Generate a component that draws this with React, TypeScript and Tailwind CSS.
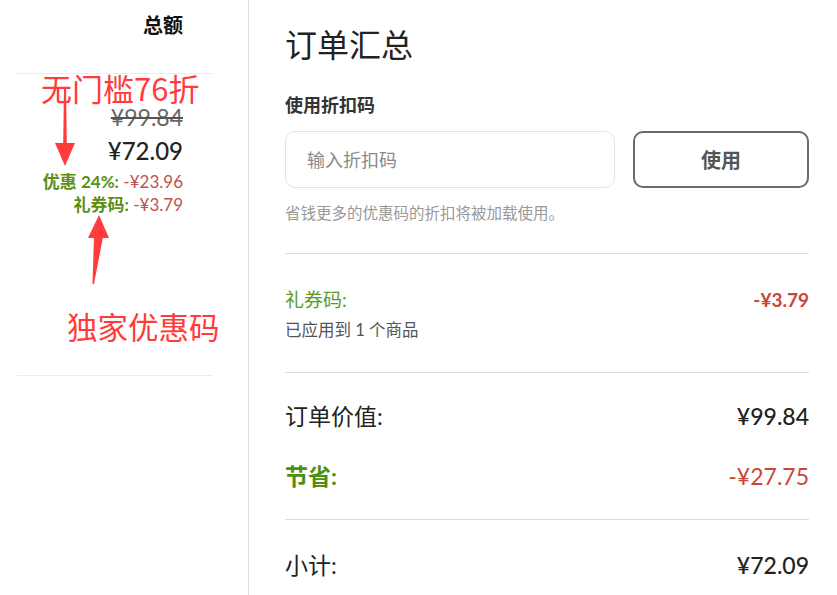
import React from 'react';

const font = { fontFamily: "Lato, 'Noto Sans CJK SC', sans-serif" };

const ArrowDown: React.FC = () => (
  <svg className="absolute left-[50px] top-[86px]" width="30" height="84" viewBox="0 0 30 84">
    <polygon points="14,2 16,2 16.8,58 14,58 13.2,58" fill="#ff3b3b" />
    <polygon points="5,57 25,57 15,80" fill="#ff3b3b" />
  </svg>
);

const ArrowUp: React.FC = () => (
  <svg className="absolute left-[80px] top-[210px]" width="36" height="80" viewBox="0 0 36 80">
    <polygon points="19,5 29,28 8,28" fill="#ff3b3b" />
    <polygon points="14,27 23,27 14,74 12.5,74" fill="#ff3b3b" />
  </svg>
);

const Divider: React.FC<{ className?: string }> = ({ className = '' }) => (
  <div className={`h-px bg-[#dcdcdc] ${className}`} />
);

export default function App() {
  return (
    <div className="w-[837px] h-[595px] bg-white flex overflow-hidden" style={font}>
      {/* Left: totals column */}
      <div className="relative w-[249px] h-full border-r border-[#dedede] pl-[17px] pr-[36px] shrink-0">
        <div className="pt-[12px] h-[38px] leading-[26px] text-[20px] font-bold text-[#111] text-right pr-[29px]">
          总额
        </div>
        <div className="mt-[35px] h-px bg-[#ececec]" />
        <div className="pr-[29px] text-right">
          <div className="mt-[30px] leading-[26px] text-[23px] text-[#666] line-through decoration-[#555]">¥99.84</div>
          <div className="mt-[6px] leading-[30px] text-[24px] font-medium text-[#222]">¥72.09</div>
          <div className="mt-[6px] leading-[20px] text-[17px] whitespace-nowrap">
            <span className="font-bold text-[#5b8f12]">优惠 24%:</span>{' '}
            <span className="text-[#c0504d]">-¥23.96</span>
          </div>
          <div className="mt-[3px] leading-[20px] text-[17px] whitespace-nowrap">
            <span className="font-bold text-[#5b8f12]">礼券码:</span>{' '}
            <span className="text-[#c0504d]">-¥3.79</span>
          </div>
        </div>
        <div className="mt-[160px] h-px bg-[#ececec]" />

        {/* Annotations */}
        <div
          className="absolute left-[41px] top-[72px] text-[31px] leading-[31px] text-[#ff3b3b] whitespace-nowrap"
          style={{ fontFamily: "'Noto Sans CJK SC', sans-serif" }}
        >
          无门槛76折
        </div>
        <ArrowDown />
        <ArrowUp />
        <div
          className="absolute left-[67px] top-[307px] text-[30.5px] leading-[38px] text-[#ff3b3b] whitespace-nowrap"
          style={{ fontFamily: "'Noto Sans CJK SC', sans-serif" }}
        >
          独家优惠码
        </div>
      </div>

      {/* Right: order summary */}
      <div className="flex-1 pl-[36px] pr-[28px] pt-[25px] flex flex-col">
        <h1 className="h-[40px] leading-[40px] text-[32px] text-[#222]">订单汇总</h1>
        <div className="mt-[28px] leading-[24px] text-[18px] font-bold text-[#333]">使用折扣码</div>
        <div className="mt-[14px] flex gap-[18px]">
          <input
            className="w-[330px] h-[57px] rounded-[10px] border border-[#e3e3e3] px-[21px] text-[18px] text-[#333] placeholder:text-[#8a8a8a] outline-none"
            placeholder="输入折扣码"
            style={font}
          />
          <button className="flex-1 h-[57px] rounded-[10px] border-2 border-[#6b6b6b] text-[20px] font-bold text-[#555] bg-white">
            使用
          </button>
        </div>
        <div className="mt-[15px] leading-[20px] text-[15.5px] text-[#999]">省钱更多的优惠码的折扣将被加载使用。</div>

        <Divider className="mt-[30px]" />

        <div className="mt-[34px] flex justify-between leading-[24px] text-[19px]">
          <span className="text-[#5b9a1a]">礼券码:</span>
          <span className="font-bold text-[#c9463d]">-¥3.79</span>
        </div>
        <div className="mt-[8px] leading-[20px] text-[16.5px] text-[#555]">已应用到 1 个商品</div>

        <Divider className="mt-[32px]" />

        <div className="mt-[29px] flex justify-between leading-[28px] text-[23px] text-[#222]">
          <span>订单价值:</span>
          <span className="font-medium">¥99.84</span>
        </div>
        <div className="mt-[32px] flex justify-between leading-[28px] text-[23px]">
          <span className="font-bold text-[#4f8f0e]">节省:</span>
          <span className="text-[#c9463d]">-¥27.75</span>
        </div>

        <Divider className="mt-[29px]" />

        <div className="mt-[31px] flex justify-between leading-[28px] text-[23px] text-[#222]">
          <span>小计:</span>
          <span className="font-medium">¥72.09</span>
        </div>
      </div>
    </div>
  );
}
